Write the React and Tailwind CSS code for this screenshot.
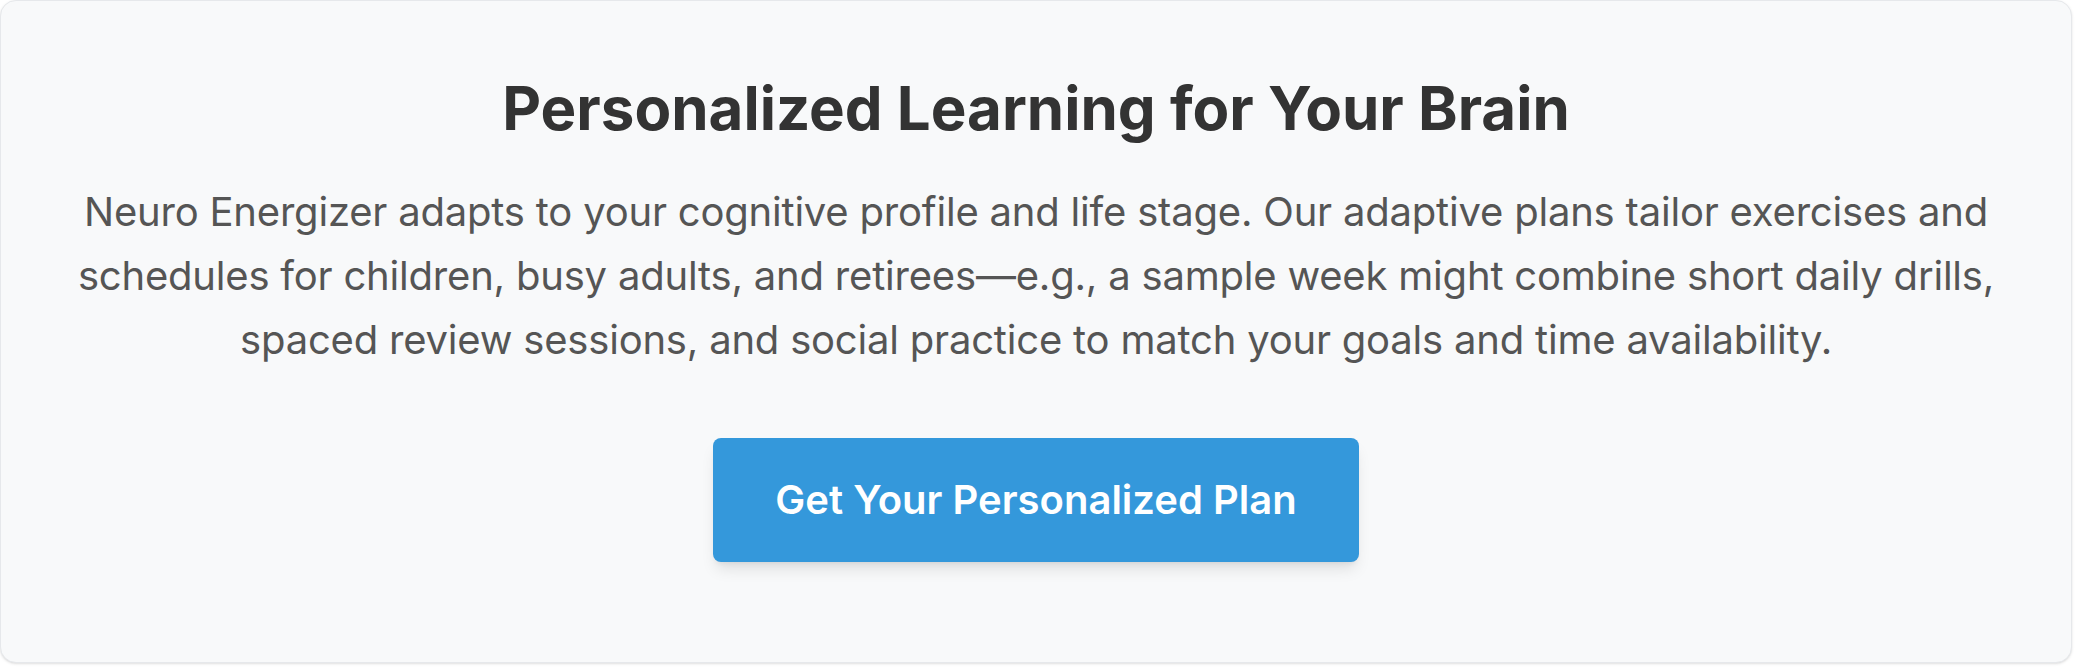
export default function App() {
    return (
        <div className="w-[2082px] h-[668px] bg-white" style={{ fontFamily: 'Inter, "Noto Sans", sans-serif' }}>
            <section className="w-[2072px] bg-[#f8f9fa] border border-[#e6e8eb] rounded-2xl shadow-sm px-[64px] pt-[71px] pb-[100px] text-center">
                <h2 className="text-[60px] leading-[72px] font-bold text-[#333333] mb-[36px]">
                    Personalized Learning for Your Brain
                </h2>
                <p className="text-[40px] leading-[64px] tracking-[-0.2px] text-[#555555] mb-[66px]">
                    Neuro Energizer adapts to your cognitive profile and life stage. Our adaptive plans tailor exercises and schedules for children, busy adults, and retirees—e.g., a sample week might combine short daily drills, spaced review sessions, and social practice to match your goals and time availability.
                </p>
                <button className="bg-[#3498db] text-white text-[40px] leading-[60px] font-semibold px-[62px] py-[32px] rounded-lg shadow-lg">
                    Get Your Personalized Plan
                </button>
            </section>
        </div>
    );
}
